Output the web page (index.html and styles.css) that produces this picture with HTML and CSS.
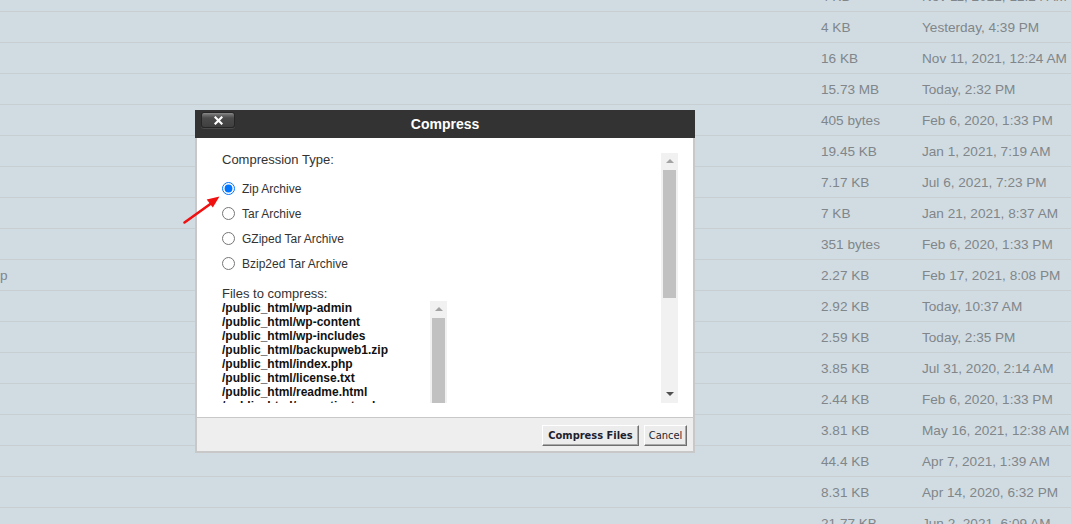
FILE: index.html
```html
<!DOCTYPE html>
<html lang="en">
<head>
<meta charset="utf-8">
<title>Compress</title>
<link rel="stylesheet" href="styles.css">
</head>
<body>
<div class="table">
  <div class="row"><span class="name"></span><span>4 KB</span><span>Nov 11, 2021, 12:24 AM</span></div>
  <div class="row"><span class="name"></span><span>4 KB</span><span>Yesterday, 4:39 PM</span></div>
  <div class="row"><span class="name"></span><span>16 KB</span><span>Nov 11, 2021, 12:24 AM</span></div>
  <div class="row"><span class="name"></span><span>15.73 MB</span><span>Today, 2:32 PM</span></div>
  <div class="row"><span class="name"></span><span>405 bytes</span><span>Feb 6, 2020, 1:33 PM</span></div>
  <div class="row"><span class="name"></span><span>19.45 KB</span><span>Jan 1, 2021, 7:19 AM</span></div>
  <div class="row"><span class="name"></span><span>7.17 KB</span><span>Jul 6, 2021, 7:23 PM</span></div>
  <div class="row"><span class="name"></span><span>7 KB</span><span>Jan 21, 2021, 8:37 AM</span></div>
  <div class="row"><span class="name"></span><span>351 bytes</span><span>Feb 6, 2020, 1:33 PM</span></div>
  <div class="row"><span class="name">p</span><span>2.27 KB</span><span>Feb 17, 2021, 8:08 PM</span></div>
  <div class="row"><span class="name"></span><span>2.92 KB</span><span>Today, 10:37 AM</span></div>
  <div class="row"><span class="name"></span><span>2.59 KB</span><span>Today, 2:35 PM</span></div>
  <div class="row"><span class="name"></span><span>3.85 KB</span><span>Jul 31, 2020, 2:14 AM</span></div>
  <div class="row"><span class="name"></span><span>2.44 KB</span><span>Feb 6, 2020, 1:33 PM</span></div>
  <div class="row"><span class="name"></span><span>3.81 KB</span><span>May 16, 2021, 12:38 AM</span></div>
  <div class="row"><span class="name"></span><span>44.4 KB</span><span>Apr 7, 2021, 1:39 AM</span></div>
  <div class="row"><span class="name"></span><span>8.31 KB</span><span>Apr 14, 2020, 6:32 PM</span></div>
  <div class="row"><span class="name"></span><span>21.77 KB</span><span>Jun 2, 2021, 6:09 AM</span></div>
</div>

<div class="modal">
  <div class="modal-head">
    <button class="close" type="button" aria-label="Close">
      <svg width="9" height="9" viewBox="0 0 9 9"><path d="M1.5 1.5 L7.5 7.5 M7.5 1.5 L1.5 7.5" stroke="#fff" stroke-width="2.2" stroke-linecap="square"/></svg>
    </button>
    <div class="title">Compress</div>
    <div></div>
  </div>
  <div class="modal-body">
    <div class="pane">
      <div class="pane-content">
        <p class="label">Compression Type:</p>
        <div class="radios">
          <label class="opt"><input type="radio" name="type" checked><span>Zip Archive</span></label>
          <label class="opt"><input type="radio" name="type"><span>Tar Archive</span></label>
          <label class="opt"><input type="radio" name="type"><span>GZiped Tar Archive</span></label>
          <label class="opt"><input type="radio" name="type"><span>Bzip2ed Tar Archive</span></label>
        </div>
        <p class="label files-label">Files to compress:</p>
        <div class="filebox">
          <div class="files">
            <div>/public_html/wp-admin</div>
            <div>/public_html/wp-content</div>
            <div>/public_html/wp-includes</div>
            <div>/public_html/backupweb1.zip</div>
            <div>/public_html/index.php</div>
            <div>/public_html/license.txt</div>
            <div>/public_html/readme.html</div>
            <div>/public_html/wp-activate.php</div>
            <div>/public_html/wp-blog-header.php</div>
            <div>/public_html/wp-comments-post.php</div>
          </div>
          <div class="sb sb-files">
            <div class="sb-btn"><span class="tri-up"></span></div>
            <div class="thumb thumb-files"></div>
          </div>
        </div>
      </div>
      <div class="sb sb-main">
        <div class="sb-btn"><span class="tri-up"></span></div>
        <div class="thumb thumb-main"></div>
        <div class="sb-fill"></div>
        <div class="sb-btn"><span class="tri-down"></span></div>
      </div>
    </div>
    <div class="modal-foot">
      <button class="btn btn-primary" type="button">Compress Files</button>
      <button class="btn btn-cancel" type="button">Cancel</button>
    </div>
  </div>
</div>

<svg class="annot" width="45" height="35" viewBox="0 0 45 35">
  <line x1="4.5" y1="30.5" x2="31" y2="11.5" stroke="#f01010" stroke-width="2.6" stroke-linecap="round"/>
  <polygon points="39.5,4.5 32.8,15.6 26.7,7.4" fill="#f01010"/>
</svg>
</body>
</html>
```

FILE: styles.css
```css
html, body {
  margin: 0;
  padding: 0;
}

body {
  width: 1071px;
  height: 524px;
  overflow: hidden;
  background: #d1dce2;
  font-family: "Liberation Sans", Arial, sans-serif;
}

.table {
  margin-top: -19px;
}

.row {
  display: grid;
  grid-template-columns: 821px 101px 1fr;
  align-items: center;
  height: 31px;
  box-sizing: border-box;
  border-bottom: 1px solid #c7cfd3;
  font-size: 13.6px;
  color: #80868a;
  white-space: nowrap;
}

.name {
  padding-left: 0;
}

/* Modal */
.modal {
  position: absolute;
  left: 195px;
  top: 110px;
  width: 500px;
}

.modal-head {
  height: 28px;
  background: #333333;
  display: grid;
  grid-template-columns: 1fr auto 1fr;
  align-items: center;
}

.close {
  justify-self: start;
  align-self: start;
  margin: 2px 0 0 6px;
  width: 34px;
  height: 16px;
  padding: 0;
  border: 1px solid #262626;
  border-radius: 3px;
  background: linear-gradient(#8c8c8c 0, #6a6a6a 2px, #4b4b4b 5px, #3f3f3f 100%);
  box-shadow: 0 1px 0 #4a4a4a;
  display: flex;
  align-items: center;
  justify-content: center;
}

.close svg {
  display: block;
}

.title {
  color: #ffffff;
  font-weight: bold;
  font-size: 14px;
}

.modal-body {
  background: #ffffff;
  border: 2px solid #c8c8c8;
  border-top: none;
  padding-top: 15px;
}

.pane {
  display: flex;
  height: 250px;
  margin: 0 15px 14px 10px;
  overflow: hidden;
}

.pane-content {
  flex: 1;
  padding-left: 15px;
  overflow: hidden;
}

.label {
  margin: -1px 0 0;
  font-size: 13px;
  line-height: 15px;
  color: #333333;
}

.radios {
  margin-top: 9px;
  display: flex;
  flex-direction: column;
}

.opt {
  height: 25px;
  display: flex;
  align-items: center;
  gap: 7px;
  font-size: 12px;
  color: #333333;
}

.opt input {
  margin: 0;
  width: 13px;
  height: 13px;
}

.files-label {
  margin-top: 10px;
}

.filebox {
  width: 225px;
  height: 150px;
  display: flex;
}

.files {
  flex: 1;
  overflow: hidden;
  font-size: 12px;
  font-weight: bold;
  line-height: 14px;
  color: #111111;
  white-space: nowrap;
}

/* Fake classic scrollbars */
.sb {
  width: 17px;
  flex: none;
  background: #f1f1f1;
  display: flex;
  flex-direction: column;
  align-items: center;
}

.sb-btn {
  height: 17px;
  width: 17px;
  flex: none;
  display: flex;
  align-items: center;
  justify-content: center;
}

.tri-up {
  width: 0;
  height: 0;
  border-left: 4px solid transparent;
  border-right: 4px solid transparent;
  border-bottom: 4px solid #a3a3a3;
  margin-top: -1px;
}

.tri-down {
  width: 0;
  height: 0;
  border-left: 4px solid transparent;
  border-right: 4px solid transparent;
  border-top: 4px solid #505050;
  margin-top: -2px;
}

.thumb {
  width: 13px;
  background: #c1c1c1;
  flex: none;
}

.thumb-main {
  height: 128px;
}

.thumb-files {
  height: 120px;
}

.sb-fill {
  flex: 1;
}

/* Footer */
.modal-foot {
  border-top: 1px solid #c8c8c8;
  background: #eeeeee;
  height: 34px;
  box-sizing: border-box;
  padding: 7px 6px 0 0;
  display: flex;
  justify-content: flex-end;
  align-items: flex-start;
  gap: 5px;
}

.btn {
  height: 21px;
  box-sizing: border-box;
  padding: 0;
  background: #ececec;
  border: 1px solid;
  border-color: #ffffff #6f6f6f #6f6f6f #ffffff;
  box-shadow: inset -1px -1px 0 #a9a9a9;
  font-family: "DejaVu Sans", Verdana, sans-serif;
  font-stretch: condensed;
  font-size: 11px;
  color: #1e1e2e;
}

.btn-primary {
  width: 97px;
  font-weight: bold;
}

.btn-cancel {
  width: 43px;
}

/* Annotation arrow */
.annot {
  position: absolute;
  left: 180px;
  top: 192px;
}
```
